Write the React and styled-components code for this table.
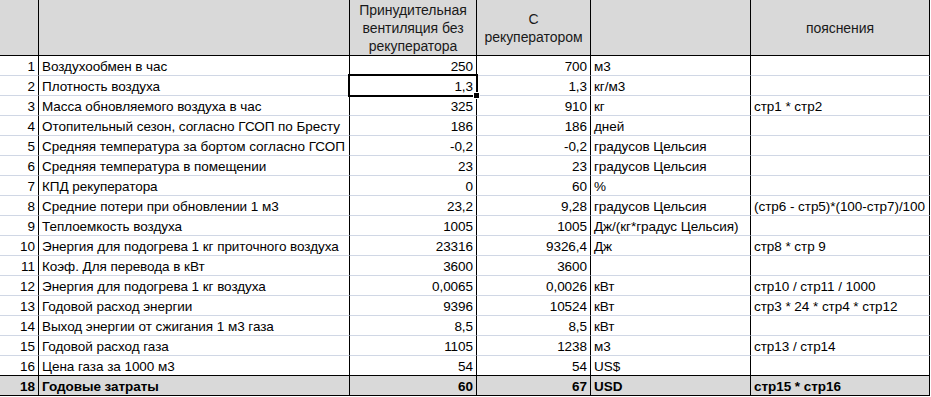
import React from "react";
import styled, { createGlobalStyle } from "styled-components";

const GlobalStyle = createGlobalStyle`
  html, body {
    margin: 0;
    padding: 0;
    background: #ffffff;
  }
  body {
    font-family: "Liberation Sans", Arial, sans-serif;
    font-size: 13.5px;
    color: #000;
  }
`;

const GRID = "#d0d7e5";
const HEAD_BG = "#d9d9d9";

const rows = [
  { n: 1, name: "Воздухообмен в час", a: "250", b: "700", unit: "м3", note: "" },
  { n: 2, name: "Плотность воздуха", a: "1,3", b: "1,3", unit: "кг/м3", note: "", selected: true },
  { n: 3, name: "Масса обновляемого воздуха в час", a: "325", b: "910", unit: "кг", note: "стр1 * стр2" },
  { n: 4, name: "Отопительный сезон, согласно ГСОП по Бресту", a: "186", b: "186", unit: "дней", note: "" },
  { n: 5, name: "Средняя температура за бортом согласно ГСОП", a: "-0,2", b: "-0,2", unit: "градусов Цельсия", note: "" },
  { n: 6, name: "Средняя температура в помещении", a: "23", b: "23", unit: "градусов Цельсия", note: "" },
  { n: 7, name: "КПД рекуператора", a: "0", b: "60", unit: "%", note: "" },
  { n: 8, name: "Средние потери при обновлении 1 м3", a: "23,2", b: "9,28", unit: "градусов Цельсия", note: "(стр6 - стр5)*(100-стр7)/100" },
  { n: 9, name: "Теплоемкость воздуха", a: "1005", b: "1005", unit: "Дж/(кг*градус Цельсия)", note: "" },
  { n: 10, name: "Энергия для подогрева 1 кг приточного воздуха", a: "23316", b: "9326,4", unit: "Дж", note: "стр8 * стр 9" },
  { n: 11, name: "Коэф. Для перевода в кВт", a: "3600", b: "3600", unit: "", note: "" },
  { n: 12, name: "Энергия для подогрева 1 кг воздуха", a: "0,0065", b: "0,0026", unit: "кВт", note: "стр10 / стр11 / 1000" },
  { n: 13, name: "Годовой расход энергии", a: "9396", b: "10524", unit: "кВт", note: "стр3 * 24 * стр4 * стр12" },
  { n: 14, name: "Выход энергии от сжигания 1 м3 газа", a: "8,5", b: "8,5", unit: "кВт", note: "" },
  { n: 15, name: "Годовой расход газа", a: "1105", b: "1238", unit: "м3", note: "стр13 / стр14" },
  { n: 16, name: "Цена газа за 1000 м3", a: "54", b: "54", unit: "US$", note: "", lastBody: true },
];

const total = { n: 18, name: "Годовые затраты", a: "60", b: "67", unit: "USD", note: "стр15 * стр16" };

const Sheet = styled.div`
  display: grid;
  grid-template-columns: 39px 311px 127px 114px 160px 179px;
  grid-template-rows: 56px;
  grid-auto-rows: 20px;
  width: 930px;
`;

const Cell = styled.div`
  position: relative;
  box-sizing: border-box;
  border-right: 1px solid #000;
  border-bottom: 1px solid ${(p) => p.$bottom || GRID};
  background: ${(p) => p.$bg || "#fff"};
  font-weight: ${(p) => (p.$bold ? 700 : 400)};
  text-align: ${(p) => p.$align || "left"};
  padding: 2px 3px 0 3px;
  line-height: 17px;
  letter-spacing: -0.05px;
  white-space: nowrap;
  overflow: ${(p) => (p.$spill ? "visible" : "hidden")};
  z-index: ${(p) => (p.$spill ? 2 : 0)};
`;

const HeadCell = styled(Cell)`
  display: flex;
  align-items: center;
  justify-content: center;
  text-align: center;
  white-space: normal;
  font-size: 14px;
  line-height: 18px;
  padding: 1px 4px 0;
  border-bottom-color: #000;
  background: ${HEAD_BG};
  color: #1a1a1a;
`;

const Selection = styled.div`
  position: absolute;
  left: -2px;
  top: -2px;
  right: -2px;
  bottom: -2px;
  border: 2px solid #000;
  pointer-events: none;

  &::after {
    content: "";
    position: absolute;
    right: -4px;
    bottom: -4px;
    width: 5px;
    height: 5px;
    background: #000;
    border: 1px solid #fff;
  }
`;

const Row = ({ r, bold, bg }) => {
  const bottom = r.lastBody || bold ? "#000" : GRID;
  return (
    <>
      <Cell $align="right" $bottom={bottom} $bold={bold} $bg={bg}>{r.n}</Cell>
      <Cell $bottom={bottom} $bold={bold} $bg={bg}>{r.name}</Cell>
      <Cell $align="right" $bottom={bottom} $bold={bold} $bg={bg} $spill={r.selected}>
        {r.a}
        {r.selected && <Selection />}
      </Cell>
      <Cell $align="right" $bottom={bottom} $bold={bold} $bg={bg}>{r.b}</Cell>
      <Cell $bottom={bottom} $bold={bold} $bg={bg}>{r.unit}</Cell>
      <Cell $bottom={bottom} $bold={bold} $bg={bg} $spill>{r.note}</Cell>
    </>
  );
};

export default function App() {
  return (
    <>
      <GlobalStyle />
      <Sheet>
        <HeadCell />
        <HeadCell />
        <HeadCell>Принудительная вентиляция без рекуператора</HeadCell>
        <HeadCell>С рекуператором</HeadCell>
        <HeadCell />
        <HeadCell>пояснения</HeadCell>
        {rows.map((r) => (
          <Row key={r.n} r={r} />
        ))}
        <Row r={total} bold bg={HEAD_BG} />
      </Sheet>
    </>
  );
}
